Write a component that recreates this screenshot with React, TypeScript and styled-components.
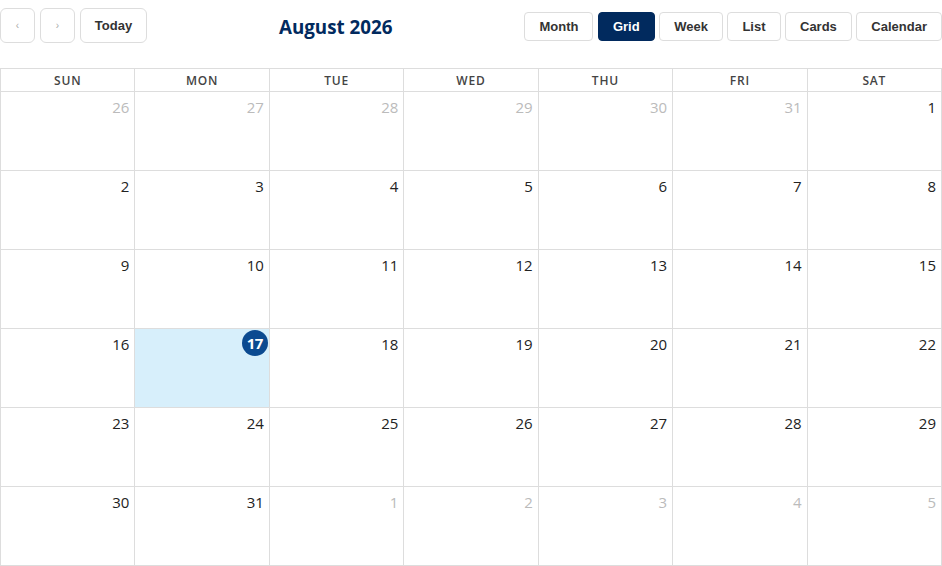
import React from 'react'
import styled, { createGlobalStyle } from 'styled-components'

const GlobalStyle = createGlobalStyle`
    html, body {
        margin: 0;
        padding: 0;
        background: #fff;
    }
    body {
        font-family: 'Open Sans', 'Noto Sans', sans-serif;
        color: #222;
    }
`

const Page = styled.div`
    width: 942px;
    box-sizing: border-box;
`

const Toolbar = styled.div`
    display: flex;
    justify-content: space-between;
    align-items: center;
    height: 35px;
    padding-top: 8px;
    margin-bottom: 25px;
`

const Group = styled.div<{ $gap: number }>`
    display: flex;
    align-items: center;
    gap: ${p => p.$gap}px;
`

const NavButton = styled.button<{ $wide?: boolean }>`
    box-sizing: border-box;
    height: 35px;
    width: ${p => (p.$wide ? '67px' : '35px')};
    border: 1px solid #ddd;
    border-radius: 6px;
    background: #fff;
    color: ${p => (p.$wide ? '#333' : '#aaa')};
    font-family: 'Liberation Sans', Arial, sans-serif;
    font-size: ${p => (p.$wide ? '13px' : '10px')};
    font-weight: ${p => (p.$wide ? 700 : 400)};
    padding: 0;
    cursor: pointer;
`

const Title = styled.h2`
    margin: 0;
    font-family: 'Open Sans', 'Noto Sans', sans-serif;
    font-size: 18.8px;
    font-weight: 700;
    color: #012a5e;
    line-height: 24px;
    padding-top: 2px;
`

const ViewButton = styled.button<{ $active?: boolean }>`
    box-sizing: border-box;
    height: 29px;
    padding: 0 14px;
    border: 1px solid ${p => (p.$active ? '#012a5e' : '#ddd')};
    border-radius: 4px;
    background: ${p => (p.$active ? '#012a5e' : '#fff')};
    color: ${p => (p.$active ? '#fff' : '#333')};
    font-family: 'Liberation Sans', Arial, sans-serif;
    font-size: 13px;
    font-weight: 700;
    cursor: pointer;
    margin-top: 2px;
`

const Calendar = styled.div`
    display: grid;
    grid-template-columns: repeat(7, 1fr);
    grid-template-rows: 23px repeat(6, 79px);
    width: 942px;
    box-sizing: border-box;
    border-top: 1px solid #ddd;
    border-left: 1px solid #ddd;
`

const HeadCell = styled.div`
    display: flex;
    align-items: center;
    justify-content: center;
    border-right: 1px solid #ddd;
    border-bottom: 1px solid #ddd;
    font-size: 12px;
    font-weight: 600;
    letter-spacing: 0.8px;
    color: #444;
    padding-top: 1px;
`

const DayCell = styled.div<{ $today?: boolean }>`
    display: flex;
    justify-content: flex-end;
    align-items: flex-start;
    padding: ${p => (p.$today ? '1px 1px' : '4px 5px')};
    border-right: 1px solid #ddd;
    border-bottom: 1px solid #ddd;
    background: ${p => (p.$today ? '#d7effb' : '#fff')};
    min-width: 0;
`

const DayNumber = styled.span<{ $muted?: boolean }>`
    font-size: 15px;
    line-height: 22px;
    color: ${p => (p.$muted ? '#bbb' : '#222')};
`

const TodayBadge = styled.span`
    display: flex;
    align-items: center;
    justify-content: center;
    width: 26px;
    height: 26px;
    border-radius: 50%;
    background: #0b4a90;
    color: #fff;
    font-size: 15px;
    font-weight: 700;
    letter-spacing: -0.5px;
`

const weekdays = ['SUN', 'MON', 'TUE', 'WED', 'THU', 'FRI', 'SAT']
const views = ['Month', 'Grid', 'Week', 'List', 'Cards', 'Calendar']

// August 2026 starts on a Saturday
const buildDays = () => {
    const days: { n: number; muted: boolean; today: boolean }[] = []
    for (let d = 26; d <= 31; d++) days.push({ n: d, muted: true, today: false })
    for (let d = 1; d <= 31; d++) days.push({ n: d, muted: false, today: d === 17 })
    let next = 1
    while (days.length < 42) days.push({ n: next++, muted: true, today: false })
    return days
}

export default function App() {
    const days = buildDays()
    return (
        <Page>
            <GlobalStyle />
            <Toolbar>
                <Group $gap={5}>
                    <NavButton>‹</NavButton>
                    <NavButton>›</NavButton>
                    <NavButton $wide>Today</NavButton>
                </Group>
                <Title>August 2026</Title>
                <Group $gap={4.5}>
                    {views.map(v => (
                        <ViewButton key={v} $active={v === 'Grid'}>
                            {v}
                        </ViewButton>
                    ))}
                </Group>
            </Toolbar>
            <Calendar>
                {weekdays.map(w => (
                    <HeadCell key={w}>{w}</HeadCell>
                ))}
                {days.map((d, i) => (
                    <DayCell key={i} $today={d.today}>
                        {d.today ? (
                            <TodayBadge>{d.n}</TodayBadge>
                        ) : (
                            <DayNumber $muted={d.muted}>{d.n}</DayNumber>
                        )}
                    </DayCell>
                ))}
            </Calendar>
        </Page>
    )
}
